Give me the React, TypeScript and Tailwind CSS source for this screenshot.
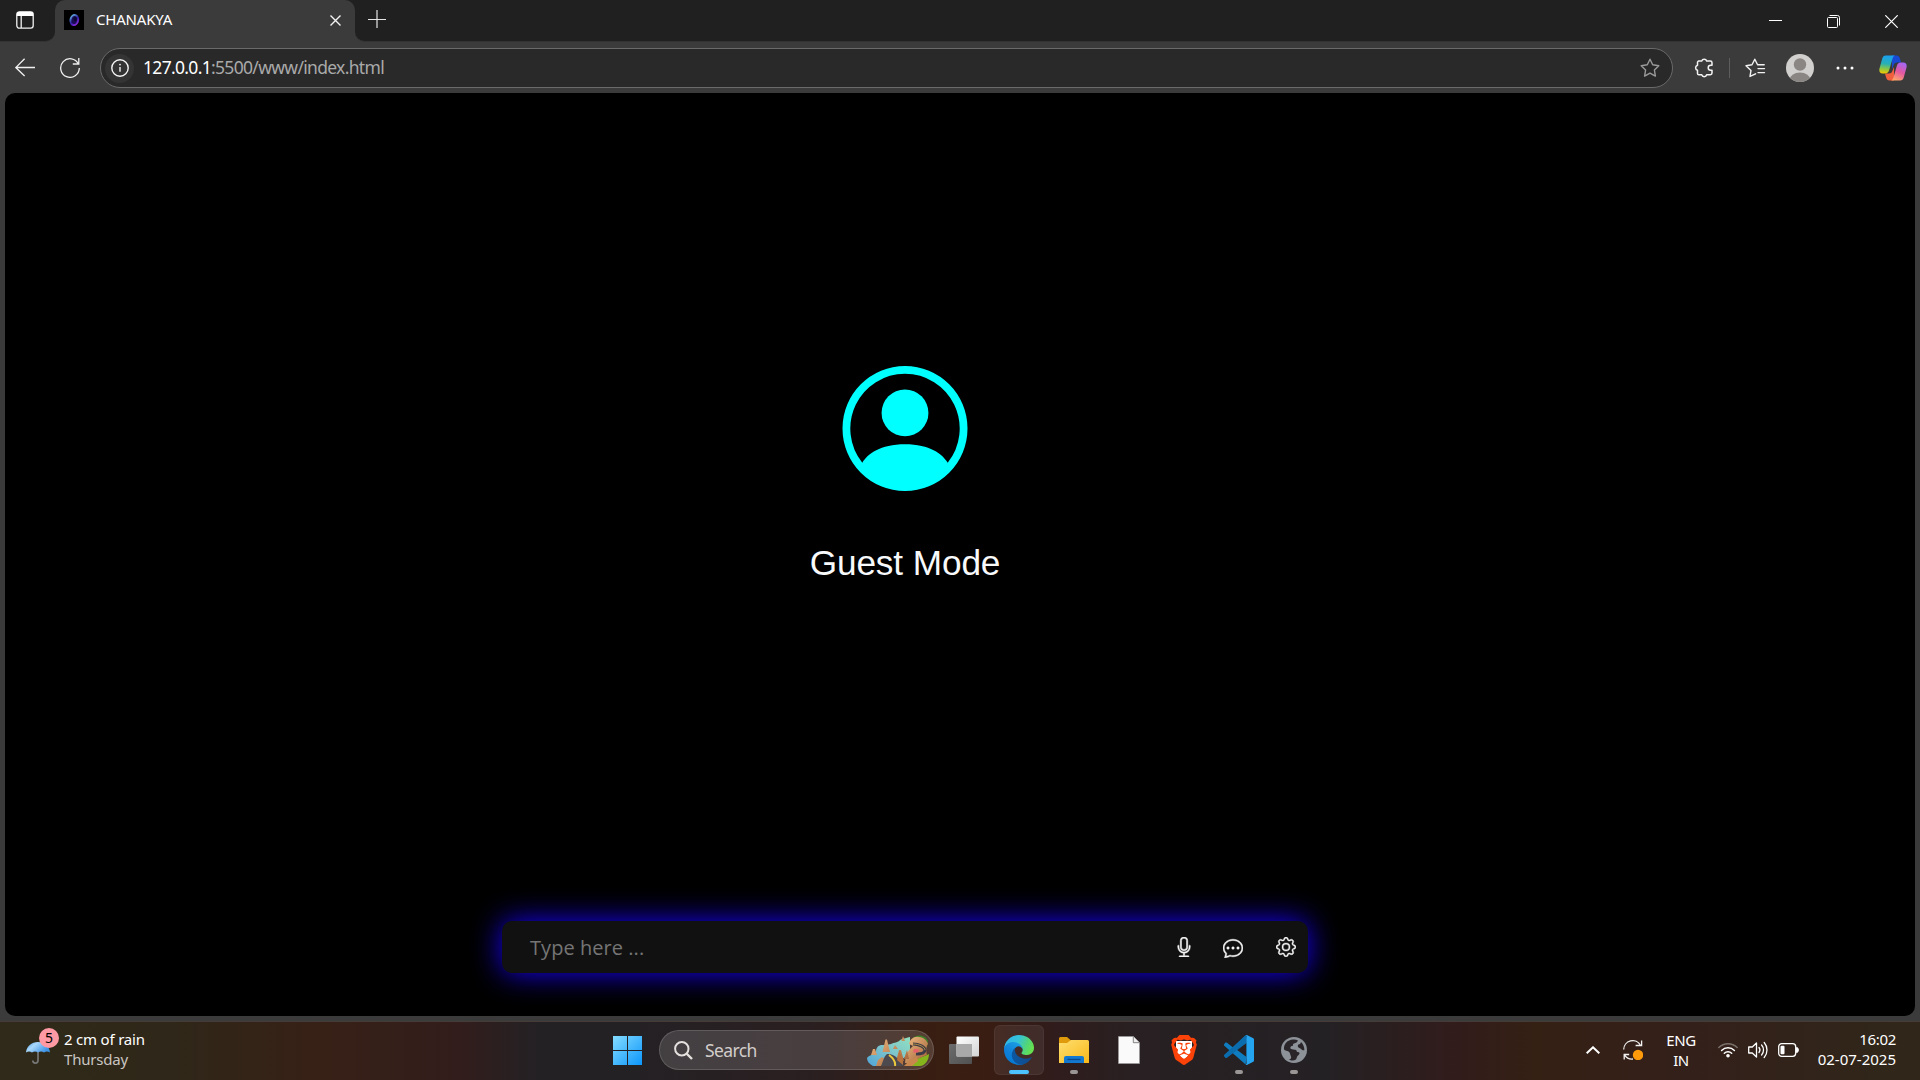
import React from "react";
import { BsMic, BsChatDots, BsGear } from "react-icons/bs";
import { SiBrave } from "react-icons/si";

const UI = "font-['Noto_Sans',sans-serif]";

function TitleBar() {
  return (
    <div className="flex h-[42px] w-full bg-[#3b3b3b]">
      <div className="flex h-full w-[55px] items-center rounded-br-[10px] border-b border-[#333333] bg-[#202020] pb-[2px] pl-4">
        <svg width="18" height="18" viewBox="0 0 18 18" fill="none">
          <rect x="0.8" y="0.8" width="16.4" height="16.4" rx="2.6" stroke="#f2f2f2" strokeWidth="1.3" />
          <path d="M0.8 5V3.4A2.6 2.6 0 0 1 3.4 0.8h11.2a2.6 2.6 0 0 1 2.6 2.6V5z" fill="#fff" />
          <path d="M5.2 5v12" stroke="#f2f2f2" strokeWidth="1.3" />
        </svg>
      </div>
      <div className="h-full w-[300px] bg-[#202020]">
        <div className="flex h-full w-full items-start rounded-t-[10px] bg-[#3b3b3b] pl-[9px] pt-[10px]">
          <svg width="20" height="20" viewBox="0 0 20 20">
            <defs>
              <linearGradient id="fav" x1="0" y1="0" x2="1" y2="1">
                <stop offset="0" stopColor="#6cc4e8" />
                <stop offset="0.5" stopColor="#2a22a0" />
                <stop offset="1" stopColor="#a02ae8" />
              </linearGradient>
            </defs>
            <rect width="20" height="20" fill="#000" />
            <ellipse cx="10.3" cy="10" rx="3.8" ry="5" fill="#1a0d58" stroke="url(#fav)" strokeWidth="2" transform="rotate(12 10 10)" />
            <ellipse cx="11.2" cy="9" rx="1.6" ry="2.6" fill="#0c0630" />
          </svg>
          <span className="-mt-px ml-[12px] w-[220px] text-[15px] leading-5 tracking-[-0.2px] text-white">CHANAKYA</span>
          <svg className="ml-[14px] mt-[5px]" width="11" height="11" viewBox="0 0 11 11">
            <path d="M0.5 0.5l10 10M10.5 0.5l-10 10" stroke="#f4f4f4" strokeWidth="1.4" />
          </svg>
        </div>
      </div>
      <div className="flex h-full flex-1 rounded-bl-[10px] border-b border-[#333333] bg-[#202020] pl-[13px]">
        <svg className="mt-[10px]" width="18" height="18" viewBox="0 0 18 18">
          <path d="M9 0v18M0 9.500h18" stroke="#e6e6e6" strokeWidth="1.2" />
        </svg>
        <div className="ml-auto flex pr-[22px] pt-[15px]">
          <svg className="mr-[45px]" width="13" height="13" viewBox="0 0 13 13">
            <path d="M0 5.5h13" stroke="#fff" strokeWidth="1" />
          </svg>
          <svg className="mr-[45px]" width="13" height="13" viewBox="0 0 13 13" fill="none" stroke="#fff">
            <rect x="0.5" y="2.5" width="10" height="10" rx="1" />
            <path d="M2.5 0.5h8a2 2 0 0 1 2 2v8" />
          </svg>
          <svg width="13" height="13" viewBox="0 0 13 13">
            <path d="M0.3 0.3l12.4 12.4M12.7 0.3L0.3 12.7" stroke="#fff" strokeWidth="1.2" />
          </svg>
        </div>
      </div>
    </div>
  );
}

const STAR = "M10 1.2l2.7 5.6 6.1.9-4.4 4.3 1 6.1-5.4-2.9-5.4 2.9 1-6.1L1.2 7.7l6.1-.9z";

function Toolbar() {
  return (
    <div className="flex h-[51px] w-full items-center pl-[15px] pt-px">
      <svg width="20" height="20" viewBox="0 0 20 20" fill="none" stroke="#f0f0f0" strokeWidth="1.3">
        <path d="M20 9.500H0.800M9.600 0.800L0.800 9.500l8.800 8.500" />
      </svg>
      <svg className="ml-[25px]" width="20" height="20" viewBox="0 0 20 20" fill="none" stroke="#f0f0f0" strokeWidth="1.3">
        <path d="M18.4 6A9.3 9.3 0 1 0 19.3 10M18.8 0v6h-6" />
      </svg>
      <div className="ml-[20px] flex h-10 w-[1573px] items-center rounded-full border border-[#6a6a6a] bg-[#292929] pl-[4px]">
        <div className="flex h-[29px] w-[29px] items-center justify-center rounded-full bg-[#343434]">
          <svg width="18" height="18" viewBox="0 0 18 18" fill="none" stroke="#f4f4f4">
            <circle cx="9" cy="9" r="8.2" strokeWidth="1.4" />
            <path d="M9 8v4.8" strokeWidth="1.4" />
            <circle cx="9" cy="5.6" r="0.9" fill="#f4f4f4" stroke="none" />
          </svg>
        </div>
        <span className="ml-[9px] whitespace-nowrap pb-[2px] text-[17.5px] leading-6 tracking-[-0.68px] text-[#a9a9a9]">
          <span className="text-white">127.0.0.1</span>:5500/www/index.html
        </span>
        <svg className="ml-auto mr-[12px]" width="20" height="20" viewBox="0 0 20 20" fill="none" stroke="#9a9a9a" strokeWidth="1.4" strokeLinejoin="round">
          <path d={STAR} />
        </svg>
      </div>
      <svg className="ml-[20.5px]" width="20" height="20" viewBox="0 0 20 20" fill="none" stroke="#f2f2f2" strokeWidth="1.5" strokeLinejoin="round">
        <path d="M4.500 3.100H7.700a2.600 2.600 0 0 1 5 0h3.600a1.700 1.700 0 0 1 1.700 1.700v2.500h-1.300a2.500 2.500 0 0 0 0 5h1.300v2.800a1.700 1.700 0 0 1-1.700 1.700h-3.600a2.600 2.600 0 0 1-5 0H4.900a1.400 1.400 0 0 1-1.400-1.400v-3.100a2.600 2.600 0 0 1 0-5V4.400a1.300 1.300 0 0 1 1.300-1.300z" />
      </svg>
      <div className="ml-[15px] h-5 w-px bg-[#5d5d5d]" />
      <svg className="ml-[15px]" width="21" height="20" viewBox="0 0 21 20" fill="none" stroke="#f2f2f2" strokeWidth="1.4" strokeLinejoin="round" strokeLinecap="round">
        <path d="M10.600 15.800L5 18.400l1-6L1 7.700l6-.9 2.800-5.600 2.800 5.600h6.600M13 10.600h6.500M13 14.600h6.500" />
      </svg>
      <svg className="ml-[20px]" width="28" height="28" viewBox="0 0 28 28">
        <defs>
          <clipPath id="av"><circle cx="14" cy="14" r="14" /></clipPath>
        </defs>
        <circle cx="14" cy="14" r="14" fill="#d2d0ce" />
        <g clipPath="url(#av)" fill="#8a8683">
          <circle cx="14" cy="10.5" r="6.2" />
          <ellipse cx="14" cy="26" rx="10.5" ry="7.6" />
        </g>
      </svg>
      <svg className="ml-[22px]" width="18" height="4" viewBox="0 0 18 4" fill="#fff">
        <circle cx="2" cy="2" r="1.5" />
        <circle cx="9" cy="2" r="1.5" />
        <circle cx="16" cy="2" r="1.5" />
      </svg>
      <svg className="ml-[25px]" width="28" height="26" viewBox="0 0 28 26">
        <defs>
          <linearGradient id="cp1" x1="0.4" y1="0" x2="0.3" y2="1">
            <stop offset="0" stopColor="#1a9ff0" />
            <stop offset="0.45" stopColor="#28b0b4" />
            <stop offset="0.75" stopColor="#8fc840" />
            <stop offset="1" stopColor="#f4c800" />
          </linearGradient>
          <linearGradient id="cp2" x1="0.7" y1="0" x2="0.3" y2="1">
            <stop offset="0" stopColor="#a566f5" />
            <stop offset="0.5" stopColor="#e458a0" />
            <stop offset="1" stopColor="#ffa66a" />
          </linearGradient>
        </defs>
        <path d="M13 0.5h4.500c2 0 2.800 1 3.400 3l1.200 4h-4c-2 0-3 1-3.600 3L13 14z" fill="#1749d2" />
        <path d="M15 25.500H10.500c-2 0-2.800-1-3.400-3L6 18.500h4c2 0 3-1 3.600-3L15 12z" fill="#f0603c" />
        <path d="M6.800 0.500H16c-1.300.3-2 1.500-2.500 3.200L10.200 15c-.7 2.300-1.700 3.500-4 3.500H3.500C1 18.500-.2 16.500.5 13.500L3.200 3.700C3.800 1.500 5 .5 6.800.5z" fill="url(#cp1)" />
        <path d="M21.200 25.500H12c1.300-.3 2-1.500 2.500-3.200L17.800 11c.7-2.300 1.700-3.500 4-3.500h2.700c2.500 0 3.700 2 3 5l-2.700 9.800c-.6 2.200-1.800 3.200-3.600 3.200z" fill="url(#cp2)" />
      </svg>
    </div>
  );
}

function Page() {
  return (
    <main className="mx-[5px] flex h-[923px] flex-col items-center overflow-hidden rounded-[10px] bg-black pr-[110px]">
      <svg className="mt-[273px]" width="126" height="125" viewBox="0 0 16 16" fill="#00ffff" preserveAspectRatio="xMidYMid meet">
        <path d="M11 6a3 3 0 1 1-6 0 3 3 0 0 1 6 0" />
        <path fillRule="evenodd" d="M0 8a8 8 0 1 1 16 0A8 8 0 0 1 0 8m8-7a7 7 0 0 0-5.468 11.370C3.242 11.226 4.805 10 8 10s4.757 1.225 5.468 2.370A7 7 0 0 0 8 1" />
      </svg>
      <h1 className="mt-[51px] font-['Liberation_Sans',Arial,sans-serif] text-[35.2px] leading-[42px] tracking-[-0.1px] text-[#f8f9fa]">Guest Mode</h1>
      <div className="mt-[337px] flex h-[52px] w-[806px] items-center rounded-[10px] bg-[#111111] pl-[28px] pr-[12px] text-[#f5f5f5] shadow-[0_0_30px_#1800ff]">
        <span className="flex-1 pt-[2px] font-['Open_Sans',sans-serif] text-[20px] tracking-[0.05px] text-[#757575]">Type here ...</span>
        <BsMic size={20} stroke="#f5f5f5" strokeWidth={0.4} />
        <BsChatDots className="ml-[29px] mt-px" size={20} stroke="#f5f5f5" strokeWidth={0.4} />
        <BsGear className="ml-[33px]" size={20} stroke="#f5f5f5" strokeWidth={0.3} />
      </div>
    </main>
  );
}

function Weather() {
  return (
    <div className="flex h-full w-[604px] items-center pl-[26px]">
      <div className="relative h-[40px] w-[38px]">
        <svg className="mt-[10px]" width="25" height="25" viewBox="0 0 25 25">
          <defs>
            <linearGradient id="um" x1="0" y1="0" x2="1" y2="0.5">
              <stop offset="0" stopColor="#4a9fe8" />
              <stop offset="0.4" stopColor="#a9d8fb" />
              <stop offset="1" stopColor="#3d93e6" />
            </linearGradient>
          </defs>
          <path d="M12 10v10.500a2.600 2.600 0 0 1-5.200 0" fill="none" stroke="#777" strokeWidth="1.700" />
          <path d="M0 12.500C.5 6.500 5.500 2 12 2s11.500 4.500 12 10.500c-2-1.300-4-1.300-6 0-2-1.300-4-1.300-6 0-2-1.300-4-1.300-6 0-2-1.300-4-1.300-6 0z" fill="url(#um)" />
        </svg>
        <span className="absolute left-[13px] top-[-2px] flex h-5 w-5 items-center justify-center rounded-full bg-[#ff99a4] text-[14px] leading-none text-black">5</span>
      </div>
      <div className="pb-[2px] text-[15px] leading-5 tracking-[-0.2px]">
        <div className="text-white">2 cm of rain</div>
        <div className="text-[#c9c5c1]">Thursday</div>
      </div>
    </div>
  );
}

function SearchArt() {
  return (
    <svg width="62" height="31" viewBox="0 0 62 31">
      <defs>
        <linearGradient id="lake" x1="0" y1="1" x2="1" y2="0">
          <stop offset="0" stopColor="#4fa5d8" />
          <stop offset="0.5" stopColor="#7cc4cc" />
          <stop offset="1" stopColor="#8fe0c0" />
        </linearGradient>
        <linearGradient id="rock" x1="0" y1="0" x2="1" y2="1">
          <stop offset="0" stopColor="#f0bd84" />
          <stop offset="1" stopColor="#a05f36" />
        </linearGradient>
      </defs>
      <path d="M0 23c2-3 7-3 9-6 0-3 1-6 5-7 4 0 7 0 10-1 3-2 7-1 9-4 4-2 7-2 10-3v17L24 31H6C2 29 0 26 0 23z" fill="url(#lake)" />
      <path d="M45 4c3-5 13-5 16 2l-1 6-12-6z" fill="#3f7d28" />
      <path d="M40 31c3-7 12-7 22-12 0 6-4 12-9 12z" fill="#86b41c" />
      <path d="M42 9c1-5 5-8 10-7 5 0 8 4 9 7-2 2-2 8-1 11l-10 4-6 4h-6l1-9 4-5 3-3z" fill="url(#rock)" />
      <path d="M46 9c6 0 12 3 12 6s-4 4-9 4" fill="none" stroke="#3d3b48" strokeWidth="3" />
      <path d="M46 9c6 0 12 3 12 6" fill="none" stroke="#e0b040" strokeWidth="0.700" />
      <path d="M47 14l5 .5-1 3-5 0z" fill="#e8606a" />
      <path d="M37 31l5-5 8-4 1 4-6 5z" fill="#c9874e" />
      <path d="M4 20l2-6h2l2 6zM15.500 17l3-12.500h1.500l3 12.500zM34.500 6L36 1l2 5zM26 14l2-4 3 4zM9 31l2-6 4-3 4 3-2 6zM29 26l3-11h2l3 11zM37 24l3-9 2 9z" fill="url(#rock)" />
      <path d="M14 31c2-4 3-10 6-12 6-1 13 5 17 12z" fill="#4c4a4e" />
      <path d="M22 20c4 3 7 6 6 11" fill="none" stroke="#ecc83c" strokeWidth="2" />
      <path d="M30 25l2.500-9 3.500 10 0 4z" fill="#b9733f" />
    </svg>
  );
}

function AppCell({ children, mark }: { children: React.ReactNode; mark?: "active" | "open" }) {
  return (
    <div className="flex h-full w-[55px] items-center justify-center">
      <div
        className={
          mark === "active"
            ? "relative flex h-[50px] w-[50px] items-center justify-center rounded-[6px] border border-white/5 bg-white/[0.07]"
            : "relative flex h-[50px] w-[50px] items-center justify-center"
        }
      >
        {children}
        {mark === "active" && <i className="absolute bottom-0 h-1 w-5 rounded-full bg-[#4cc2ff]" />}
        {mark === "open" && <i className="absolute bottom-px h-1 w-2 rounded-full bg-[#9a9696]" />}
      </div>
    </div>
  );
}

function Apps() {
  return (
    <div className="flex h-full">
      <AppCell>
        <svg width="30" height="28" viewBox="0 0 30 28">
          <defs>
            <linearGradient id="tv1" x1="0" y1="0" x2="1" y2="1"><stop offset="0" stopColor="#fff" /><stop offset="1" stopColor="#d4d4d4" /></linearGradient>
            <linearGradient id="tv2" x1="0" y1="0" x2="1" y2="1"><stop offset="0" stopColor="#6d6d6d" /><stop offset="1" stopColor="#505050" /></linearGradient>
          </defs>
          <rect x="0" y="8" width="23" height="20" rx="1" fill="url(#tv2)" />
          <rect x="7.500" y="0.500" width="22.500" height="20" rx="1" fill="url(#tv1)" />
          <rect x="7.500" y="8" width="15.500" height="12.500" fill="#a9a9a9" />
        </svg>
      </AppCell>
      <AppCell mark="active">
        <svg width="30" height="30" viewBox="0 0 256 256">
          <defs>
            <linearGradient id="e1" x1="0" y1="0" x2="1" y2="0"><stop offset="0" stopColor="#0c59a4" /><stop offset="1" stopColor="#114a8b" /></linearGradient>
            <linearGradient id="e2" x1="0.7" y1="0.1" x2="0.2" y2="1"><stop offset="0" stopColor="#1b9de2" /><stop offset="0.500" stopColor="#1080d8" /><stop offset="1" stopColor="#0078d4" /></linearGradient>
            <linearGradient id="e3" x1="0" y1="0.200" x2="1" y2="0.500"><stop offset="0" stopColor="#2fb4ea" /><stop offset="0.450" stopColor="#36c3d8" /><stop offset="0.750" stopColor="#4fd47e" /><stop offset="1" stopColor="#66e04f" /></linearGradient>
          </defs>
          <path fill="url(#e1)" d="M231.070 190.540c-3.550 1.860-7.200 3.500-10.950 4.920a105 105 0 0 1-36.830 6.600c-48.500 0-90.760-33.360-90.760-76.180.13-11.680 6.500-22.400 16.630-28.020-43.880 1.850-55.150 47.570-55.150 74.350 0 75.750 69.800 83.430 84.840 83.430 8.100 0 20.330-2.360 27.670-4.680l1.340-.45A127.980 127.980 0 0 0 235.400 193.600c1.900-2.400-.9-4.900-4.330-3.060z" />
          <path fill="url(#e2)" d="M105.730 241.420A79.200 79.200 0 0 1 83 220.080a80.720 80.720 0 0 1 26.170-120.400c3.140-1.480 8.500-4.150 15.640-4.020a32.500 32.500 0 0 1 25.800 13 31.880 31.880 0 0 1 6.350 18.660c0-.2 24.600-79.960-80.390-79.960C32.440 47.360 0 89.250 0 126a130.150 130.150 0 0 0 12.110 56 128 128 0 0 0 152.520 67.110 75.550 75.550 0 0 1-58.900-7.690z" />
          <path fill="url(#e3)" d="M152.330 148.860c-.81 1.050-3.300 2.500-3.300 5.660 0 2.610 1.700 5.120 4.720 7.230 14.380 10 41.490 8.680 41.560 8.680a59.560 59.560 0 0 0 30.270-8.350 61.380 61.380 0 0 0 30.430-52.880c.26-22.410-8-37.310-11.340-43.910C223.460 23.840 177.720 0 128 0A128 128 0 0 0 0 126.200c.48-36.540 36.800-66.050 80-66.050 3.500 0 23.460.34 42 10.070 16.340 8.580 24.900 18.940 30.850 29.210 6.180 10.670 7.280 24.150 7.280 29.520 0 5.370-2.740 13.330-7.800 19.900z" />
        </svg>
      </AppCell>
      <AppCell mark="open">
        <svg width="30" height="26" viewBox="0 0 30 26">
          <defs>
            <linearGradient id="fo" x1="0" y1="0" x2="1" y2="1"><stop offset="0" stopColor="#ffdf70" /><stop offset="1" stopColor="#f8b81a" /></linearGradient>
          </defs>
          <path d="M0 1.500A1.500 1.500 0 0 1 1.500 0H8l4 3.500V8H0z" fill="#e09b0c" />
          <path d="M0 6h8l4-3h16.500A1.500 1.500 0 0 1 30 4.500V26H0z" fill="url(#fo)" />
          <path d="M5 26v-5a2 2 0 0 1 2-2h16a2 2 0 0 1 2 2v5z" fill="#1278d0" />
          <rect x="8.500" y="21.800" width="13" height="1.300" fill="#0a4a8c" />
        </svg>
      </AppCell>
      <AppCell>
        <svg width="22" height="28" viewBox="0 0 22 28">
          <path d="M0.500 0.500h14.800l6.200 6.200v20.800h-21z" fill="#fafafa" stroke="#9c9c9c" strokeWidth="0.700" />
          <path d="M15.300 0.500v6.200h6.200" fill="#eee" stroke="#777" strokeWidth="0.900" />
        </svg>
      </AppCell>
      <AppCell>
        <div className="relative flex h-[30px] w-[30px] items-center justify-center">
          <svg width="16" height="22" viewBox="0 0 16 22" fill="#fff"><path d="M0 2h16v11l-8 8-8-8z" /></svg>
          <SiBrave className="absolute inset-0" size={30} color="#fb4208" />
        </div>
      </AppCell>
      <AppCell mark="open">
        <svg width="30" height="30" viewBox="0 0 100 100">
          <path d="M72 1L30 42 10 26c-2-1.500-4-1.500-6 0L1 30c-1.500 2-1.500 4 0 6l71 62 3-22V25z" fill="#0f7cc0" />
          <path d="M75 27L44 50 10 76c-2 1-4 1-6 0l-3-4c-1.500-2-1.500-4 0-6L72 1l5 10z" fill="#0b6cae" />
          <path d="M75 27L44 50l31 23z" fill="#262023" />
          <path d="M72 1c2-1 4-1 6 0l18 9c3 1.500 4 3 4 6v68c0 3-1 4.500-4 6l-18 9c-2 1-4 1-6 0 2 0 3-2 3-4V5c0-2-1-4-3-4z" fill="#25a4f0" />
        </svg>
      </AppCell>
      <AppCell mark="open">
        <svg width="26" height="26" viewBox="0 0 26 26">
          <circle cx="13" cy="13" r="13" fill="#8d9299" />
          <path d="M3 12.500C2.500 7 6.500 3 12 2.600c2-.1 3.500.1 4.800.6-.2 1.600-1.200 2.600-3 3-1.800.3-2 1.300-1.800 2.600-2 .2-2.800 1-2.600 2.300.2 1 1.200 1.400 2.800 1.400 2.800 0 3.600.8 3.800 2.600 2.400-.3 3.200 1 2 2.500-.9 1.300-1.800 1.300-2.200 2.900-.3 1.800-1.500 3-4.300 3-1.500 0-2.500-.2-3.500-.7 2.200-.8 2.700-2.200 1.700-4-.8-1.400-.3-3-2.200-4.200-1.700-1-3-.6-4.500-2.100z" fill="#2a2529" />
          <path d="M20 5c2 2 3.300 4.500 3.400 8-1.500.6-2.800-.1-3.600-1.300-1-.7-2.800-.7-3-2.400-.1-1.500 1-2 2.200-2.200.6-.6.700-1.300 1-2.100z" fill="#2a2529" />
        </svg>
      </AppCell>
    </div>
  );
}

function Tray() {
  return (
    <div className="ml-auto flex h-full items-center pr-[24px] text-white">
      <svg width="14" height="8" viewBox="0 0 14 8" fill="none" stroke="#fff" strokeWidth="2">
        <path d="M0.700 7.300L7 1.300l6.300 6" />
      </svg>
      <svg className="ml-[23px]" width="20" height="20" viewBox="0 0 20 20" fill="none" stroke="#f2f2f2" strokeWidth="1.300">
        <path d="M0.700 9.500A9 9 0 0 1 17.500 5.200M18.600 0.500v5h-6M1.200 19.500v-5h5M1.500 14.800A9 9 0 0 0 10 19" />
        <circle cx="15" cy="15" r="5.200" fill="#ff9a0a" stroke="none" />
      </svg>
      <div className="ml-[22px] w-[32px] text-center text-[15px] leading-5 tracking-[-0.4px]">
        <div>ENG</div>
        <div>IN</div>
      </div>
      <svg className="ml-[21px]" width="20" height="16" viewBox="0 0 20 16" fill="none" strokeWidth="1.500" strokeLinecap="round">
        <path d="M0.800 5.500a13 13 0 0 1 18.400 0" stroke="#7a706a" />
        <path d="M3.600 8.500a9 9 0 0 1 12.800 0M6.300 11.200a5.200 5.200 0 0 1 7.400 0" stroke="#fff" />
        <circle cx="10" cy="13.700" r="1.800" fill="#fff" />
      </svg>
      <svg className="ml-[10px]" width="20" height="18" viewBox="0 0 20 18" fill="none" stroke="#fff" strokeWidth="1.300" strokeLinejoin="round" strokeLinecap="round">
        <path d="M0.700 6v6h3.600l4.200 4V2L4.300 6zM11 6.500a4 4 0 0 1 0 5M13.600 4a7.500 7.500 0 0 1 0 10M16.200 1.500a11.500 11.500 0 0 1 0 15" />
      </svg>
      <svg className="ml-[10px]" width="21" height="14" viewBox="0 0 21 14">
        <rect x="0.700" y="0.700" width="17" height="12.600" rx="3" fill="none" stroke="#fff" strokeWidth="1.300" />
        <rect x="2.500" y="2.700" width="4" height="8.600" rx="1" fill="#fff" />
        <path d="M18.500 4.500c1.600.3 1.800 1 1.800 2.500s-.2 2.200-1.800 2.500z" fill="#fff" stroke="#fff" />
      </svg>
      <div className="w-[97px] pb-[3px] text-right text-[15px] leading-5">
        <div className="tracking-[-0.3px]">16:02</div>
        <div>02-07-2025</div>
      </div>
    </div>
  );
}

function Taskbar() {
  return (
    <footer className="flex h-[59px] w-full items-center border-t border-[#453c38] bg-[linear-gradient(90deg,#2f2a19_0%,#2f2719_9%,#372116_16%,#321d1c_24%,#242124_28%,#242124_33%,#2b1f20_43%,#381e12_48%,#3a1d12_51%,#301c1c_55%,#282022_59%,#242124_69%,#321c1b_76%,#352014_80%,#33201a_88%,#30271a_100%)] pb-[2px]">
      <Weather />
      <div className="flex h-full items-center">
        <div className="w-[55px] pl-[9px]">
          <svg width="29" height="29" viewBox="0 0 29 29">
            <defs>
              <linearGradient id="wn" x1="0" y1="0" x2="29" y2="29" gradientUnits="userSpaceOnUse">
                <stop offset="0" stopColor="#84dcff" />
                <stop offset="1" stopColor="#0c96fb" />
              </linearGradient>
            </defs>
            <path d="M0 0h14v14H0zM15 0h14v14H15zM0 15h14v14H0zM15 15h14v14H15z" fill="url(#wn)" />
          </svg>
        </div>
        <div className="flex h-10 w-[275px] items-center overflow-hidden rounded-full border border-white/15 bg-white/[0.14] pl-[14px] pr-[4px]">
          <svg width="19" height="19" viewBox="0 0 19 19" fill="none" stroke="#e4e0de" strokeWidth="2">
            <circle cx="7.800" cy="7.800" r="6.700" />
            <path d="M12.500 12.500l5.500 5.500" strokeWidth="2.400" />
          </svg>
          <span className="ml-[12px] flex-1 text-[17.5px] tracking-[-0.6px] text-[#d2cdca]">Search</span>
          <SearchArt />
        </div>
        <div className="ml-[2px] h-full"><Apps /></div>
      </div>
      <Tray />
    </footer>
  );
}

export default function App() {
  return (
    <div className={`flex h-[1080px] w-[1920px] flex-col overflow-hidden bg-[#3b3b3b] ${UI}`}>
      <TitleBar />
      <Toolbar />
      <Page />
      <div className="h-[5px]" />
      <Taskbar />
    </div>
  );
}
